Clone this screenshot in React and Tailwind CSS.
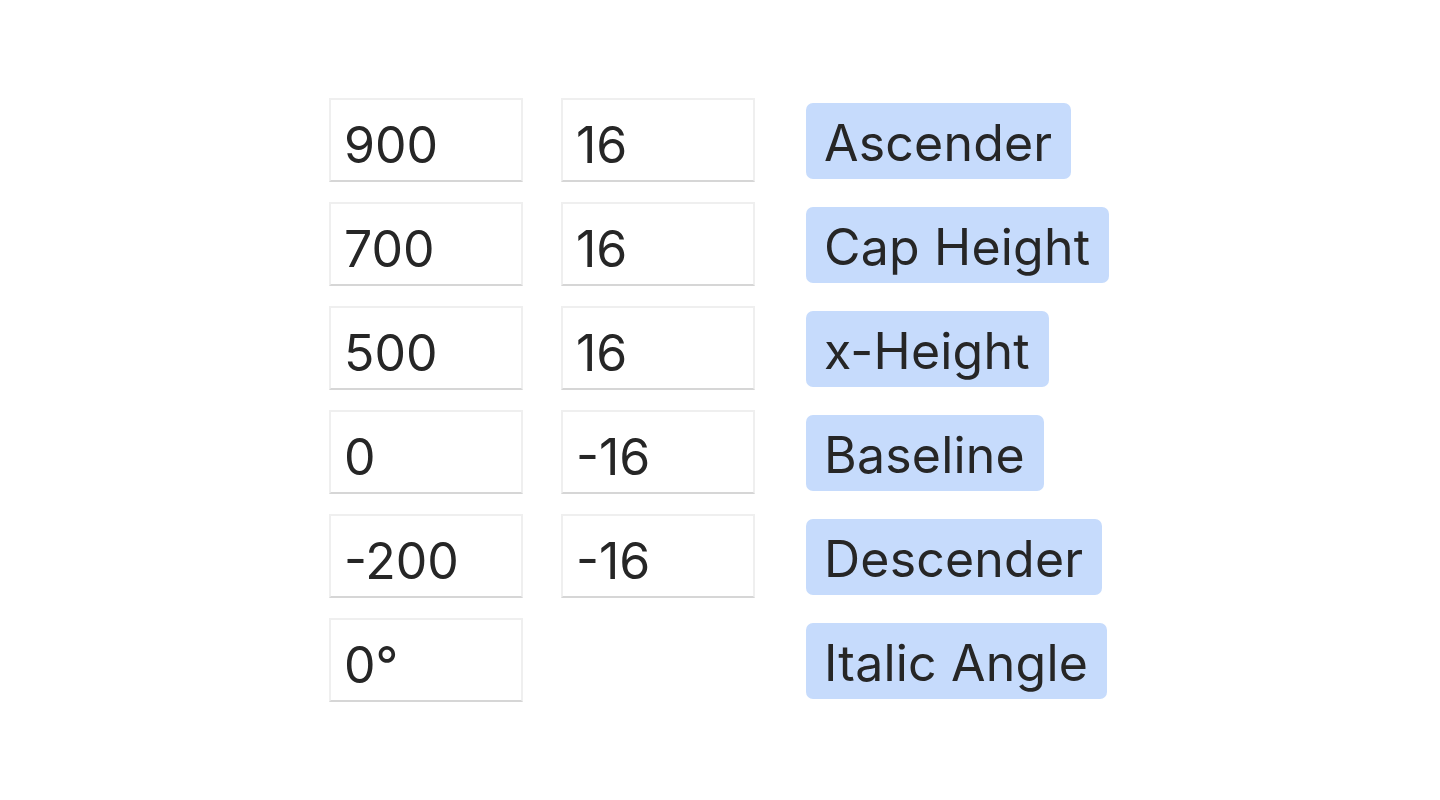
const rows = [
  { a: "900", b: "16", label: "Ascender" },
  { a: "700", b: "16", label: "Cap Height" },
  { a: "500", b: "16", label: "x-Height" },
  { a: "0", b: "-16", label: "Baseline" },
  { a: "-200", b: "-16", label: "Descender" },
  { a: "0°", b: null, label: "Italic Angle" },
];

const Field = ({ value }) => (
  <div className="w-[194px] h-[84px] flex items-center pl-[13px] pt-[10px] bg-white border-2 border-[#efefef] border-b-[#d6d6d6] text-[50px] text-[#262626]">
    {value}
  </div>
);

export default function App() {
  return (
    <div
      className="w-full h-[800px] bg-white pt-[98px] pl-[329px]"
      style={{ fontFamily: "Inter, 'Noto Sans', sans-serif" }}
    >
      <div className="grid grid-cols-[194px_194px_auto] gap-x-[38px] gap-y-[20px] items-center">
        {rows.map((r) => (
          <div key={r.label} className="contents">
            <Field value={r.a} />
            {r.b !== null ? <Field value={r.b} /> : <div />}
            <div className="ml-[13px] pt-[2px]">
              <span className="inline-flex items-center h-[76px] pl-[18px] pr-[19px] pt-[3px] rounded-[7px] bg-[#c6dbfc] text-[50px] text-[#262626] leading-none tracking-[0.2px]">
                {r.label}
              </span>
            </div>
          </div>
        ))}
      </div>
    </div>
  );
}
